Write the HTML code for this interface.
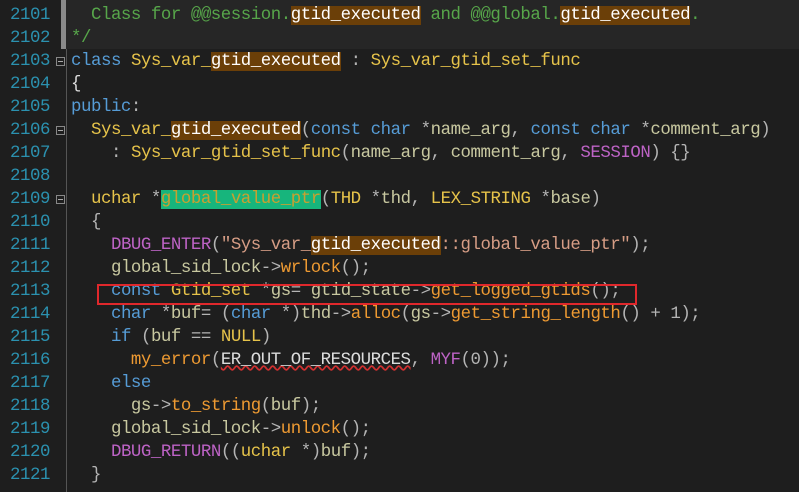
<!DOCTYPE html>
<html><head><meta charset="utf-8"><style>
body{margin:0;background:#1e1e1e;width:799px;height:492px;overflow:hidden;position:relative;font-family:"Liberation Mono",monospace;font-size:17.4px;letter-spacing:-0.45px}
.ln{position:absolute;left:0;width:50px;text-align:right;color:#2b91af}
.c{position:absolute;left:71px;white-space:pre;color:#dcdcdc}
.row{position:absolute;left:0;height:23px;line-height:23px;width:799px}
.k{color:#569cd6}.t{color:#e6c34a}.f{color:#ee9a32}.i{color:#c8c8a0}.m{color:#bd63c5}.s{color:#d69d85}.cm{color:#57a64a}.o{color:#b4b4b4}
.h{background:#6b3f08;color:#fff}
.g{background:#17b57c;color:#c8a030}
.fold{position:absolute;left:56px;width:9px;height:9px;border:1px solid #888;box-sizing:border-box}
.fold:after{content:"";position:absolute;left:1px;top:3px;width:5px;height:1px;background:#aaa}
</style></head><body>
<div style="position:absolute;left:66px;top:0;width:733px;height:49px;background:#262626"></div>
<div style="position:absolute;left:61px;top:0;width:5px;height:49px;background:#8a8a8a"></div>
<div style="position:absolute;left:66px;top:49px;width:1px;height:443px;background:#555"></div>
<div class="fold" style="top:57px;background:#1e1e1e"></div>
<div class="fold" style="top:126px;background:#1e1e1e"></div>
<div class="fold" style="top:195px;background:#1e1e1e"></div>

<div class="row" style="top:4px"><span class="ln">2101</span><span class="c cm">  Class for @@session.<span class="h">gtid_executed</span> and @@global.<span class="h">gtid_executed</span>.</span></div>
<div class="row" style="top:27px"><span class="ln">2102</span><span class="c cm">*/</span></div>
<div class="row" style="top:50px"><span class="ln">2103</span><span class="c"><span class="k">class</span> <span class="t">Sys_var_<span class="h">gtid_executed</span></span> <span class="o">:</span> <span class="t">Sys_var_gtid_set_func</span></span></div>
<div class="row" style="top:73px"><span class="ln">2104</span><span class="c">{</span></div>
<div class="row" style="top:96px"><span class="ln">2105</span><span class="c"><span class="k">public</span><span class="o">:</span></span></div>
<div class="row" style="top:119px"><span class="ln">2106</span><span class="c">  <span class="t">Sys_var_<span class="h">gtid_executed</span></span><span class="o">(</span><span class="k">const</span> <span class="k">char</span> <span class="o">*</span><span class="i">name_arg</span><span class="o">,</span> <span class="k">const</span> <span class="k">char</span> <span class="o">*</span><span class="i">comment_arg</span><span class="o">)</span></span></div>
<div class="row" style="top:142px"><span class="ln">2107</span><span class="c">    <span class="o">:</span> <span class="t">Sys_var_gtid_set_func</span><span class="o">(</span><span class="i">name_arg</span><span class="o">,</span> <span class="i">comment_arg</span><span class="o">,</span> <span class="m">SESSION</span><span class="o">) {}</span></span></div>
<div class="row" style="top:165px"><span class="ln">2108</span></div>
<div class="row" style="top:188px"><span class="ln">2109</span><span class="c">  <span class="t">uchar</span> <span class="o">*</span><span class="g">global_value_ptr</span><span class="o">(</span><span class="t">THD</span> <span class="o">*</span><span class="i">thd</span><span class="o">,</span> <span class="t">LEX_STRING</span> <span class="o">*</span><span class="i">base</span><span class="o">)</span></span></div>
<div class="row" style="top:211px"><span class="ln">2110</span><span class="c o">  {</span></div>
<div class="row" style="top:234px"><span class="ln">2111</span><span class="c">    <span class="m">DBUG_ENTER</span><span class="o">(</span><span class="s">"Sys_var_<span class="h">gtid_executed</span>::global_value_ptr"</span><span class="o">);</span></span></div>
<div class="row" style="top:257px"><span class="ln">2112</span><span class="c">    <span class="i">global_sid_lock</span><span class="o">-&gt;</span><span class="f">wrlock</span><span class="o">();</span></span></div>
<div class="row" style="top:280px"><span class="ln">2113</span><span class="c">    <span class="k">const</span> <span class="t">Gtid_set</span> <span class="o">*</span><span class="i">gs</span><span class="o">=</span> <span class="i">gtid_state</span><span class="o">-&gt;</span><span class="f">get_logged_gtids</span><span class="o">();</span></span></div>
<div class="row" style="top:303px"><span class="ln">2114</span><span class="c">    <span class="k">char</span> <span class="o">*</span><span class="i">buf</span><span class="o">= (</span><span class="k">char</span> <span class="o">*)</span><span class="i">thd</span><span class="o">-&gt;</span><span class="f">alloc</span><span class="o">(</span><span class="i">gs</span><span class="o">-&gt;</span><span class="f">get_string_length</span><span class="o">() + 1);</span></span></div>
<div class="row" style="top:326px"><span class="ln">2115</span><span class="c">    <span class="k">if</span> <span class="o">(</span><span class="i">buf</span> <span class="o">==</span> <span class="t">NULL</span><span class="o">)</span></span></div>
<div class="row" style="top:349px"><span class="ln">2116</span><span class="c">      <span class="f">my_error</span><span class="o">(</span><span style="color:#dcdcdc;text-decoration:underline wavy #d03030">ER_OUT_OF_RESOURCES</span><span class="o">,</span> <span class="m">MYF</span><span class="o">(0));</span></span></div>
<div class="row" style="top:372px"><span class="ln">2117</span><span class="c">    <span class="k">else</span></span></div>
<div class="row" style="top:395px"><span class="ln">2118</span><span class="c">      <span class="i">gs</span><span class="o">-&gt;</span><span class="f">to_string</span><span class="o">(</span><span class="i">buf</span><span class="o">);</span></span></div>
<div class="row" style="top:418px"><span class="ln">2119</span><span class="c">    <span class="i">global_sid_lock</span><span class="o">-&gt;</span><span class="f">unlock</span><span class="o">();</span></span></div>
<div class="row" style="top:441px"><span class="ln">2120</span><span class="c">    <span class="m">DBUG_RETURN</span><span class="o">((</span><span class="t">uchar</span> <span class="o">*)</span><span class="i">buf</span><span class="o">);</span></span></div>
<div class="row" style="top:464px"><span class="ln">2121</span><span class="c o">  }</span></div>
<div style="position:absolute;left:97px;top:284px;width:540px;height:21px;border:2px solid #e0282c;box-sizing:border-box"></div>
</body></html>
